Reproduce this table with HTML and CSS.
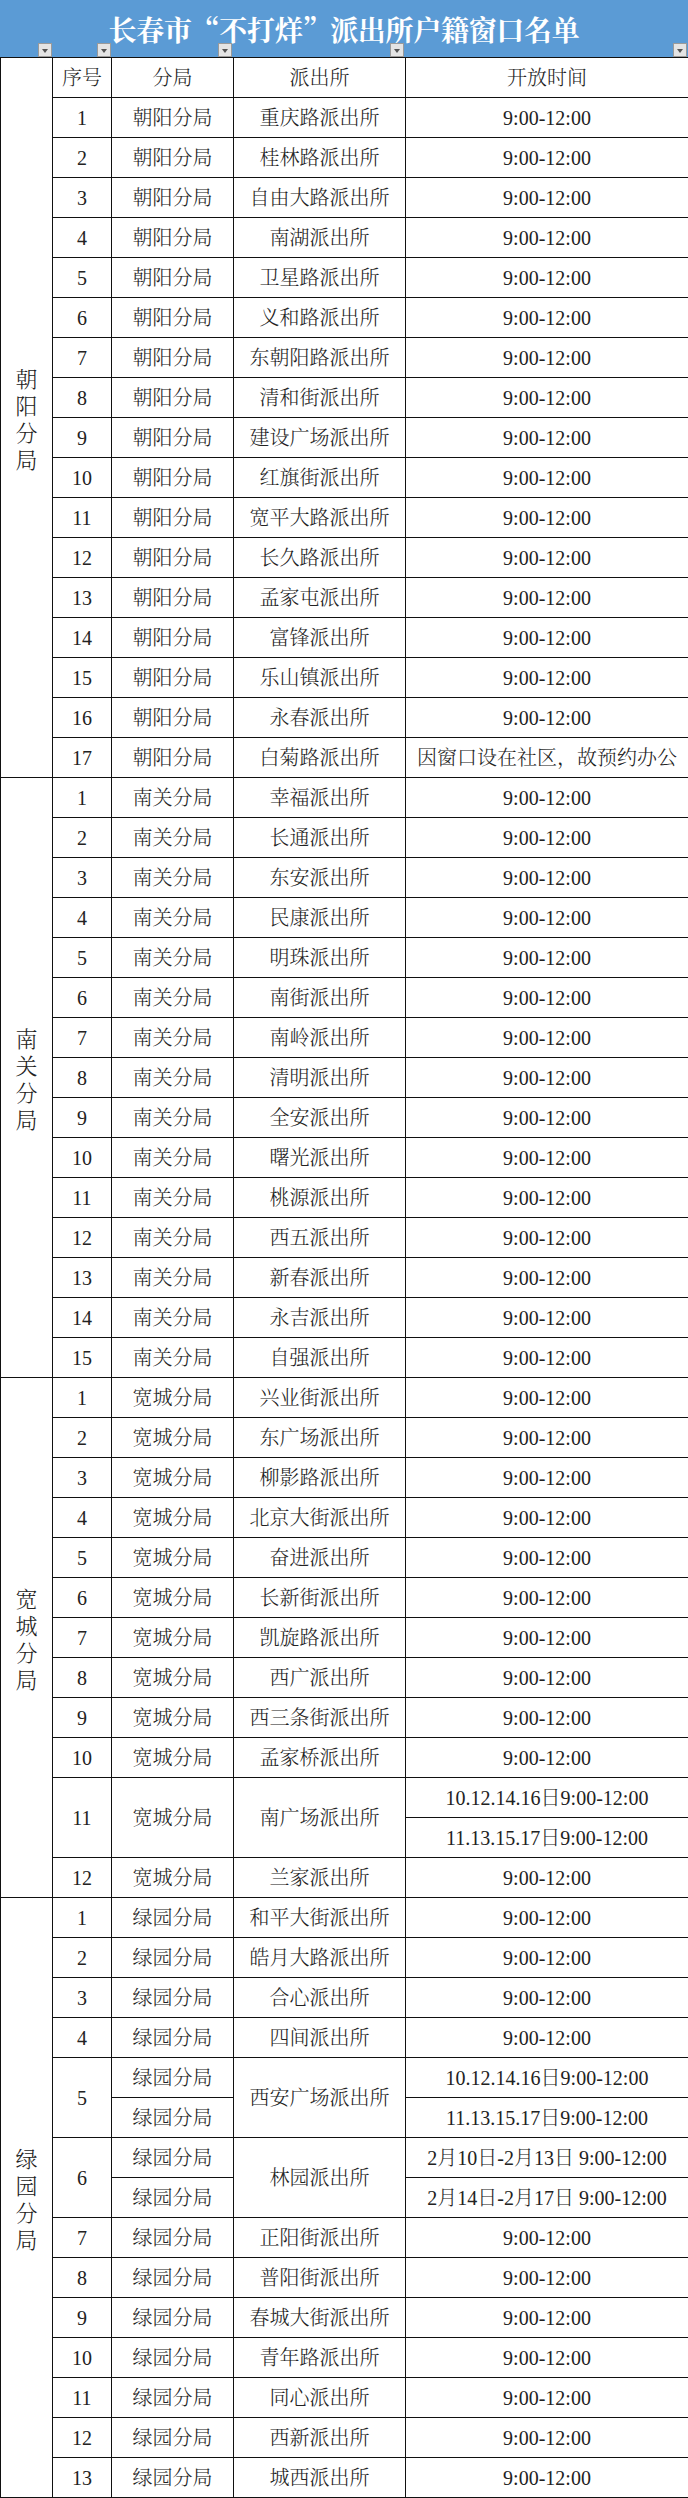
FILE: index.html
```html
<!DOCTYPE html>
<html lang="zh-CN">
<head>
<meta charset="utf-8">
<title>长春市“不打烊”派出所户籍窗口名单</title>
<link rel="stylesheet" href="styles.css">
</head>
<body>
<div class="sheet">
  <div class="title-bar">
    <h1 class="title">长春市“不打烊”派出所户籍窗口名单</h1>
    <div class="filters">
      <div class="fcell c1"><span class="filter-btn"></span></div>
      <div class="fcell c2"><span class="filter-btn"></span></div>
      <div class="fcell c3"><span class="filter-btn"></span></div>
      <div class="fcell c4"><span class="filter-btn"></span></div>
      <div class="fcell c5"><span class="filter-btn"></span></div>
    </div>
  </div>
  <table class="grid">
    <colgroup>
      <col class="w1"><col class="w2"><col class="w3"><col class="w4"><col class="w5">
    </colgroup>
    <tbody>
      <tr>
        <td class="district" rowspan="18"><div class="vtext">朝阳分局</div></td>
        <td>序号</td><td>分局</td><td>派出所</td><td>开放时间</td>
      </tr>
      <tr><td>1</td><td>朝阳分局</td><td>重庆路派出所</td><td>9:00-12:00</td></tr>
      <tr><td>2</td><td>朝阳分局</td><td>桂林路派出所</td><td>9:00-12:00</td></tr>
      <tr><td>3</td><td>朝阳分局</td><td>自由大路派出所</td><td>9:00-12:00</td></tr>
      <tr><td>4</td><td>朝阳分局</td><td>南湖派出所</td><td>9:00-12:00</td></tr>
      <tr><td>5</td><td>朝阳分局</td><td>卫星路派出所</td><td>9:00-12:00</td></tr>
      <tr><td>6</td><td>朝阳分局</td><td>义和路派出所</td><td>9:00-12:00</td></tr>
      <tr><td>7</td><td>朝阳分局</td><td>东朝阳路派出所</td><td>9:00-12:00</td></tr>
      <tr><td>8</td><td>朝阳分局</td><td>清和街派出所</td><td>9:00-12:00</td></tr>
      <tr><td>9</td><td>朝阳分局</td><td>建设广场派出所</td><td>9:00-12:00</td></tr>
      <tr><td>10</td><td>朝阳分局</td><td>红旗街派出所</td><td>9:00-12:00</td></tr>
      <tr><td>11</td><td>朝阳分局</td><td>宽平大路派出所</td><td>9:00-12:00</td></tr>
      <tr><td>12</td><td>朝阳分局</td><td>长久路派出所</td><td>9:00-12:00</td></tr>
      <tr><td>13</td><td>朝阳分局</td><td>孟家屯派出所</td><td>9:00-12:00</td></tr>
      <tr><td>14</td><td>朝阳分局</td><td>富锋派出所</td><td>9:00-12:00</td></tr>
      <tr><td>15</td><td>朝阳分局</td><td>乐山镇派出所</td><td>9:00-12:00</td></tr>
      <tr><td>16</td><td>朝阳分局</td><td>永春派出所</td><td>9:00-12:00</td></tr>
      <tr><td>17</td><td>朝阳分局</td><td>白菊路派出所</td><td>因窗口设在社区，故预约办公</td></tr>

      <tr>
        <td class="district" rowspan="15"><div class="vtext">南关分局</div></td>
        <td>1</td><td>南关分局</td><td>幸福派出所</td><td>9:00-12:00</td>
      </tr>
      <tr><td>2</td><td>南关分局</td><td>长通派出所</td><td>9:00-12:00</td></tr>
      <tr><td>3</td><td>南关分局</td><td>东安派出所</td><td>9:00-12:00</td></tr>
      <tr><td>4</td><td>南关分局</td><td>民康派出所</td><td>9:00-12:00</td></tr>
      <tr><td>5</td><td>南关分局</td><td>明珠派出所</td><td>9:00-12:00</td></tr>
      <tr><td>6</td><td>南关分局</td><td>南街派出所</td><td>9:00-12:00</td></tr>
      <tr><td>7</td><td>南关分局</td><td>南岭派出所</td><td>9:00-12:00</td></tr>
      <tr><td>8</td><td>南关分局</td><td>清明派出所</td><td>9:00-12:00</td></tr>
      <tr><td>9</td><td>南关分局</td><td>全安派出所</td><td>9:00-12:00</td></tr>
      <tr><td>10</td><td>南关分局</td><td>曙光派出所</td><td>9:00-12:00</td></tr>
      <tr><td>11</td><td>南关分局</td><td>桃源派出所</td><td>9:00-12:00</td></tr>
      <tr><td>12</td><td>南关分局</td><td>西五派出所</td><td>9:00-12:00</td></tr>
      <tr><td>13</td><td>南关分局</td><td>新春派出所</td><td>9:00-12:00</td></tr>
      <tr><td>14</td><td>南关分局</td><td>永吉派出所</td><td>9:00-12:00</td></tr>
      <tr><td>15</td><td>南关分局</td><td>自强派出所</td><td>9:00-12:00</td></tr>

      <tr>
        <td class="district" rowspan="13"><div class="vtext">宽城分局</div></td>
        <td>1</td><td>宽城分局</td><td>兴业街派出所</td><td>9:00-12:00</td>
      </tr>
      <tr><td>2</td><td>宽城分局</td><td>东广场派出所</td><td>9:00-12:00</td></tr>
      <tr><td>3</td><td>宽城分局</td><td>柳影路派出所</td><td>9:00-12:00</td></tr>
      <tr><td>4</td><td>宽城分局</td><td>北京大街派出所</td><td>9:00-12:00</td></tr>
      <tr><td>5</td><td>宽城分局</td><td>奋进派出所</td><td>9:00-12:00</td></tr>
      <tr><td>6</td><td>宽城分局</td><td>长新街派出所</td><td>9:00-12:00</td></tr>
      <tr><td>7</td><td>宽城分局</td><td>凯旋路派出所</td><td>9:00-12:00</td></tr>
      <tr><td>8</td><td>宽城分局</td><td>西广派出所</td><td>9:00-12:00</td></tr>
      <tr><td>9</td><td>宽城分局</td><td>西三条街派出所</td><td>9:00-12:00</td></tr>
      <tr><td>10</td><td>宽城分局</td><td>孟家桥派出所</td><td>9:00-12:00</td></tr>
      <tr><td rowspan="2">11</td><td rowspan="2">宽城分局</td><td rowspan="2">南广场派出所</td><td>10.12.14.16日9:00-12:00</td></tr>
      <tr><td>11.13.15.17日9:00-12:00</td></tr>
      <tr><td>12</td><td>宽城分局</td><td>兰家派出所</td><td>9:00-12:00</td></tr>

      <tr>
        <td class="district" rowspan="15"><div class="vtext">绿园分局</div></td>
        <td>1</td><td>绿园分局</td><td>和平大街派出所</td><td>9:00-12:00</td>
      </tr>
      <tr><td>2</td><td>绿园分局</td><td>皓月大路派出所</td><td>9:00-12:00</td></tr>
      <tr><td>3</td><td>绿园分局</td><td>合心派出所</td><td>9:00-12:00</td></tr>
      <tr><td>4</td><td>绿园分局</td><td>四间派出所</td><td>9:00-12:00</td></tr>
      <tr><td rowspan="2">5</td><td>绿园分局</td><td rowspan="2">西安广场派出所</td><td>10.12.14.16日9:00-12:00</td></tr>
      <tr><td>绿园分局</td><td>11.13.15.17日9:00-12:00</td></tr>
      <tr><td rowspan="2">6</td><td>绿园分局</td><td rowspan="2">林园派出所</td><td>2月10日-2月13日 9:00-12:00</td></tr>
      <tr><td>绿园分局</td><td>2月14日-2月17日 9:00-12:00</td></tr>
      <tr><td>7</td><td>绿园分局</td><td>正阳街派出所</td><td>9:00-12:00</td></tr>
      <tr><td>8</td><td>绿园分局</td><td>普阳街派出所</td><td>9:00-12:00</td></tr>
      <tr><td>9</td><td>绿园分局</td><td>春城大街派出所</td><td>9:00-12:00</td></tr>
      <tr><td>10</td><td>绿园分局</td><td>青年路派出所</td><td>9:00-12:00</td></tr>
      <tr><td>11</td><td>绿园分局</td><td>同心派出所</td><td>9:00-12:00</td></tr>
      <tr><td>12</td><td>绿园分局</td><td>西新派出所</td><td>9:00-12:00</td></tr>
      <tr><td>13</td><td>绿园分局</td><td>城西派出所</td><td>9:00-12:00</td></tr>
    </tbody>
  </table>
</div>
</body>
</html>
```

FILE: styles.css
```css
html, body {
  margin: 0;
  padding: 0;
  background: #ffffff;
}

.sheet {
  width: 688px;
  font-family: "Liberation Serif", "Noto Serif CJK SC", "Noto Sans CJK SC", serif;
  color: #222222;
}

.title-bar {
  position: relative;
  height: 57px;
  background: #5b9bd5;
}

.title {
  margin: 0;
  height: 57px;
  line-height: 58px;
  text-align: center;
  font-size: 28px;
  font-weight: bold;
  color: #ffffff;
  font-family: "Noto Serif CJK SC", "Noto Sans CJK SC", sans-serif;
  letter-spacing: -0.3px;
}

.filters {
  position: absolute;
  left: 0;
  bottom: 0;
  display: flex;
}

.fcell {
  display: flex;
  justify-content: flex-end;
}
.fcell.c1 { width: 52px; }
.fcell.c2 { width: 59px; }
.fcell.c3 { width: 121px; }
.fcell.c4 { width: 172px; }
.fcell.c5 { width: 283px; }

.filter-btn {
  position: relative;
  box-sizing: border-box;
  width: 14px;
  height: 14px;
  background: #e4e4e4;
  border: 1px solid #9a9a9a;
}
.filter-btn::after {
  content: "";
  position: absolute;
  left: 3px;
  top: 5px;
  border-left: 3.5px solid transparent;
  border-right: 3.5px solid transparent;
  border-top: 4px solid #555555;
}

.grid {
  width: 688px;
  border-collapse: collapse;
  table-layout: fixed;
}

.w1 { width: 52px; }
.w2 { width: 59px; }
.w3 { width: 122px; }
.w4 { width: 172px; }
.w5 { width: 283px; }

.grid tr {
  height: 40px;
}

.grid td {
  border: 1px solid #111111;
  padding: 0;
  text-align: center;
  vertical-align: middle;
  font-size: 20px;
  line-height: 24px;
  font-weight: 300;
  white-space: nowrap;
}

.grid td.district {
  vertical-align: middle;
}

.vtext {
  width: 22px;
  margin: 0 auto;
  font-size: 22px;
  line-height: 27px;
  font-weight: 300;
  white-space: normal;
  word-break: break-all;
  font-family: "Noto Serif CJK SC", "Noto Sans CJK SC", serif;
}
```
